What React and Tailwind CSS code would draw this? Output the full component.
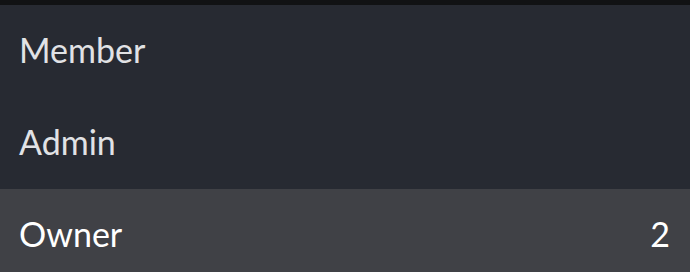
import React from 'react';

const roles = [
    { name: 'Member', count: null, active: false },
    { name: 'Admin', count: null, active: false },
    { name: 'Owner', count: 2, active: true },
];

const App = () => {
    return (
        <div className="w-[690px] h-[272px] overflow-hidden bg-[#111214] pt-[5px] font-['Lato',sans-serif]">
            <div className="bg-[#272a32]">
                {roles.map((role) => (
                    <div
                        key={role.name}
                        className={`flex items-center justify-between h-[92px] pl-[19px] pr-5 pb-[4px] text-[34px] ${role.active ? 'bg-[#404146] text-white' : 'text-[#e1e2e5]'}`}
                    >
                        <span>{role.name}</span>
                        {role.count !== null && <span>{role.count}</span>}
                    </div>
                ))}
            </div>
        </div>
    );
};

export default App;
